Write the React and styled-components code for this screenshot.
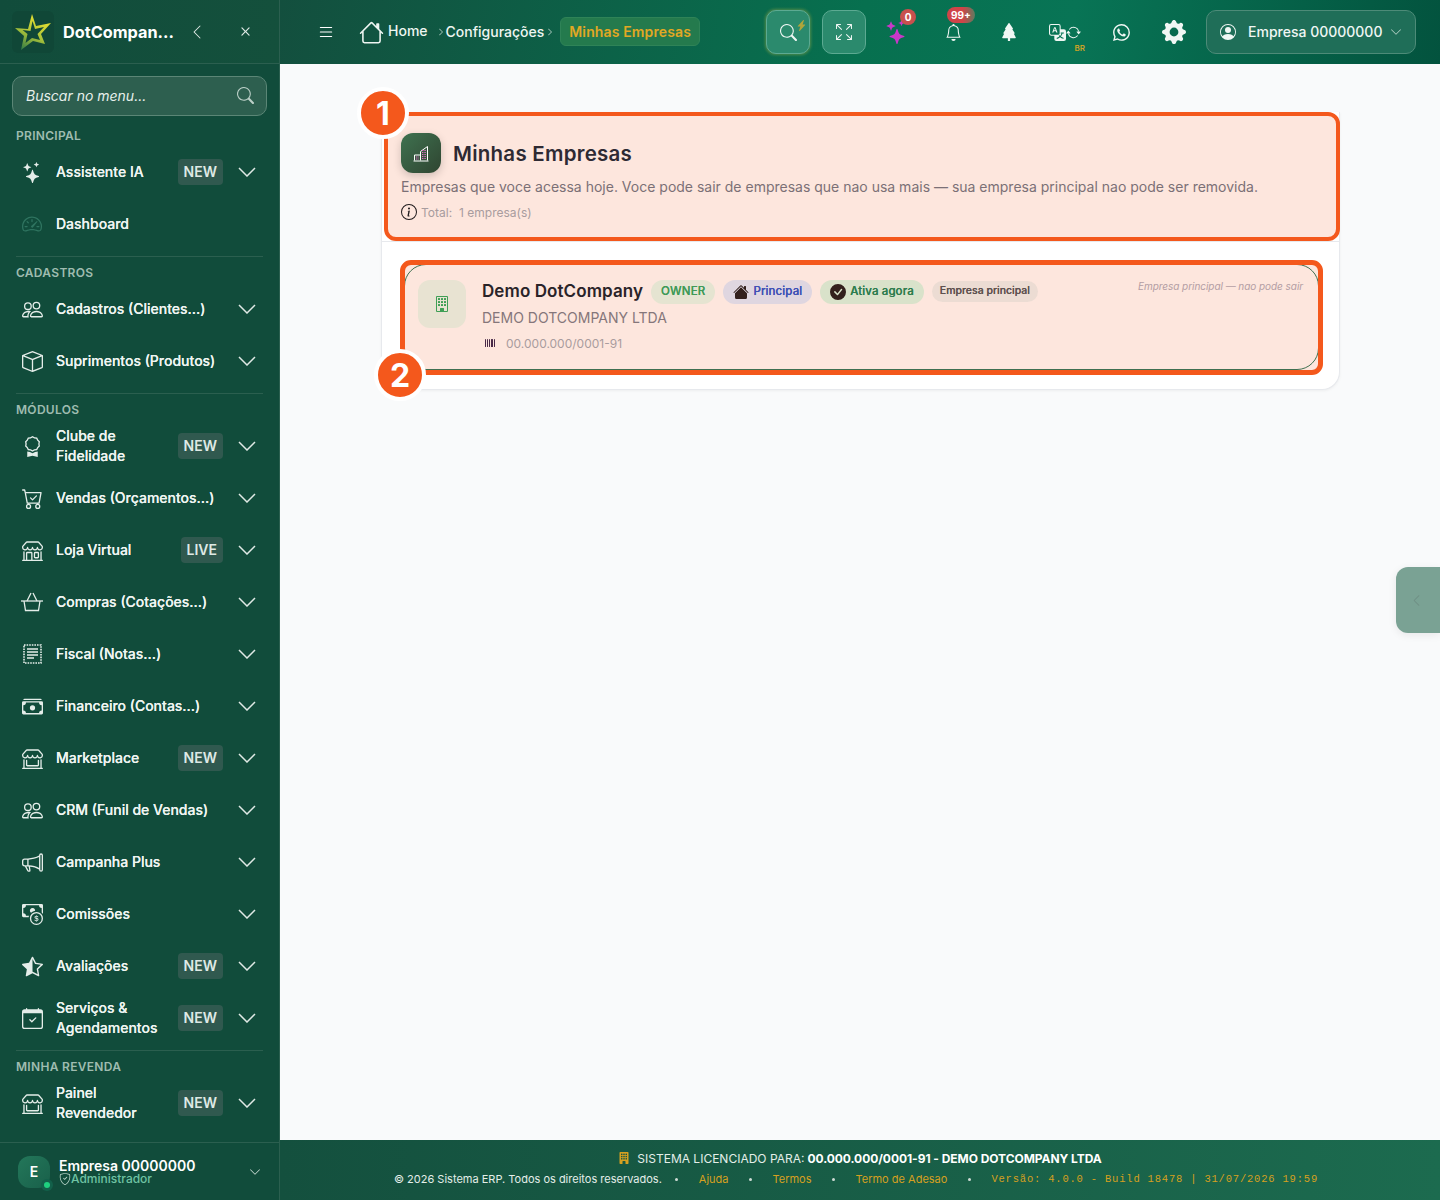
import React from 'react';
import styled, { createGlobalStyle } from 'styled-components';
import {
  BsStars, BsSpeedometer2, BsPeople, BsBox, BsAward, BsCartCheck, BsShop,
  BsCashStack, BsShopWindow, BsMegaphone, BsCashCoin, BsStarHalf, BsCalendarCheck,
  BsSearch, BsArrowsFullscreen, BsBell, BsTreeFill, BsTranslate, BsArrowRepeat,
  BsWhatsapp, BsGearFill, BsPersonCircle, BsBuilding, BsBuildingFill, BsUpc, BsInfoCircle,
  BsHouse, BsHouseFill, BsCheckCircleFill, BsList, BsShieldCheck, BsChevronDown,
  BsChevronLeft, BsChevronRight, BsX, BsLightningChargeFill,
} from 'react-icons/bs';

const GlobalStyle = createGlobalStyle`
  html, body { margin: 0; padding: 0; background: #f9fafb; }
  body { font-family: Inter, "Liberation Sans", sans-serif; }
  * { box-sizing: border-box; }
`;

const Page = styled.div`
  display: grid;
  grid-template-columns: 280px 1fr;
  height: 1200px;
  overflow: hidden;
  position: relative;
`;

/* sidebar */
const Sidebar = styled.aside`
  display: flex;
  flex-direction: column;
  background: #114c3b;
  border-right: 1px solid #2b5f4f;
  color: #eef4f1;
`;

const Brand = styled.div`
  display: flex;
  align-items: center;
  height: 64px;
  padding-left: 12px;
  border-bottom: 1px solid #2b5f4f;
  background: linear-gradient(90deg, #114c3b, #14503c);
`;

const LogoBox = styled.div`
  width: 42px;
  height: 42px;
  margin-right: 9px;
  background: #104737;
  border-radius: 6px;
  display: flex;
  align-items: center;
  justify-content: center;
`;

const BrandName = styled.span`
  width: 110px;
  font-size: 16.3px;
  font-weight: 700;
  color: #fff;
  white-space: nowrap;
`;

const BrandAction = styled.button`
  width: 48px;
  padding: 0;
  border: 0;
  background: none;
  color: #dfe9e5;
  display: flex;
  align-items: center;
  justify-content: center;
`;

const SearchBox = styled.div`
  display: flex;
  align-items: center;
  justify-content: space-between;
  height: 40px;
  margin: 12px 12px 11px 12px;
  padding: 0 12px 2px 13px;
  background: #2d5f4f;
  border: 1px solid #5b8676;
  border-radius: 10px;
  font-size: 14px;
  font-style: italic;
  color: #e6efeb;
  svg { color: #bcd0c8; font-style: normal; }
`;

const Nav = styled.nav`
  flex: 1;
`;

const NavLabel = styled.div`
  height: 17px;
  line-height: 17px;
  margin-bottom: 2px;
  padding-left: 16px;
  font-size: 12px;
  font-weight: 600;
  letter-spacing: 0.3px;
  color: #9fbcb0;
`;

const NavDivider = styled.div`
  height: 1px;
  margin: 6px 16px 7px 16px;
  background: #2b5f4f;
`;

const NavRow = styled.div`
  display: flex;
  align-items: center;
  height: 52px;
  padding: 0 23px 0 21px;
`;

const NavIcon = styled.span`
  width: 22px;
  height: 22px;
  margin-right: 13px;
  display: flex;
  align-items: center;
  justify-content: center;
  color: ${(p) => (p.$dim ? '#2f7460' : '#e4ede9')};
  flex-shrink: 0;
`;

const NavText = styled.span`
  flex: 1;
  font-size: 14px;
  font-weight: 500;
  line-height: 20px;
  color: #eef4f1;
  text-shadow: 0 0 0.4px currentColor;
  max-width: ${(p) => (p.$narrow ? '110px' : 'none')};
  margin-right: ${(p) => (p.$narrow ? 'auto' : '0')};
  white-space: ${(p) => (p.$narrow ? 'normal' : 'nowrap')};
`;

const NavBadge = styled.span`
  height: 26px;
  line-height: 26px;
  margin-left: auto;
  padding: 0 6px;
  background: #30594f;
  border-radius: 4px;
  font-size: 14px;
  font-weight: 600;
  color: #dfe9e5;
`;

const Caret = styled.svg`
  margin-left: 15px;
  flex-shrink: 0;
`;

function WideChevron() {
  return (
    <Caret width="18" height="10" viewBox="0 0 18 10" fill="none" stroke="#dfe9e5" strokeWidth="1.5">
      <path d="M1 1l8 8 8-8" />
    </Caret>
  );
}

function FiscalIcon() {
  return (
    <svg width="19" height="20" viewBox="0 0 19 20" fill="none" stroke="currentColor">
      <rect x="1" y="1" width="17" height="18" strokeWidth="1.6" strokeDasharray="1.6 1" />
      <path d="M4 5h11M4 8h11M4 11h11M4 14h7" strokeWidth="1.4" />
    </svg>
  );
}

function BasketIcon() {
  return (
    <svg width="22" height="20" viewBox="0 0 22 20" fill="none" stroke="currentColor" strokeWidth="1.3">
      <path d="M0 9h22" />
      <path d="M6 9l4-8M16 9l-4-8" />
      <path d="M3 9l1.500 9.500h13L19 9" />
    </svg>
  );
}

function StarLogo() {
  return (
    <svg width="38" height="38" viewBox="0 0 38 38">
      <defs>
        <linearGradient id="starGold" x1="0.7" y1="0" x2="0.2" y2="1">
          <stop offset="0" stopColor="#f2e52e" />
          <stop offset="0.55" stopColor="#a9c23a" />
          <stop offset="1" stopColor="#2f7a45" />
        </linearGradient>
      </defs>
      <path
        d="M18 1l4 12 15-3-10 11 4 10-12-3-12 9 3-14L1 15l13 1z"
        fill="url(#starGold)"
      />
      <path d="M18.500 8l2.500 8 9-2-6.500 7 2.500 6-8-2-6.500 5 2-9-5-4 8 1z" fill="#104737" />
    </svg>
  );
}

const navGroups = [
  {
    title: 'PRINCIPAL',
    items: [
      { icon: <BsStars size={21} />, text: 'Assistente IA', badge: 'NEW' },
      { icon: <BsSpeedometer2 size={20} />, text: 'Dashboard', dim: true, noCaret: true },
    ],
  },
  {
    title: 'CADASTROS',
    items: [
      { icon: <BsPeople size={21} />, text: 'Cadastros (Clientes...)' },
      { icon: <BsBox size={21} />, text: 'Suprimentos (Produtos)' },
    ],
  },
  {
    title: 'MÓDULOS',
    items: [
      { icon: <BsAward size={21} />, text: 'Clube de Fidelidade', badge: 'NEW', narrow: true },
      { icon: <BsCartCheck size={21} />, text: 'Vendas (Orçamentos...)' },
      { icon: <BsShop size={21} />, text: 'Loja Virtual', badge: 'LIVE' },
      { icon: <BasketIcon />, text: 'Compras (Cotações...)' },
      { icon: <FiscalIcon />, text: 'Fiscal (Notas...)' },
      { icon: <BsCashStack size={21} />, text: 'Financeiro (Contas...)' },
      { icon: <BsShopWindow size={21} />, text: 'Marketplace', badge: 'NEW' },
      { icon: <BsPeople size={21} />, text: 'CRM (Funil de Vendas)' },
      { icon: <BsMegaphone size={21} />, text: 'Campanha Plus' },
      { icon: <BsCashCoin size={21} />, text: 'Comissões' },
      { icon: <BsStarHalf size={21} />, text: 'Avaliações', badge: 'NEW' },
      { icon: <BsCalendarCheck size={21} />, text: 'Serviços & Agendamentos', badge: 'NEW', narrow: true },
    ],
  },
  {
    title: 'MINHA REVENDA',
    items: [{ icon: <BsShopWindow size={21} />, text: 'Painel Revendedor', badge: 'NEW', narrow: true }],
  },
];

const UserBox = styled.div`
  display: flex;
  align-items: center;
  height: 58px;
  padding: 0 18px;
  border-top: 1px solid #2b5f4f;
`;

const Avatar = styled.div`
  position: relative;
  width: 32px;
  height: 32px;
  margin-right: 9px;
  border-radius: 12px;
  background: linear-gradient(135deg, #23775a, #19604a);
  display: flex;
  align-items: center;
  justify-content: center;
  font-size: 14px;
  font-weight: 600;
  color: #fff;
`;

const OnlineDot = styled.span`
  position: absolute;
  right: 0;
  bottom: 0;
  width: 6px;
  height: 6px;
  border-radius: 50%;
  background: #1fd07f;
  box-shadow: 0 0 0 3px #13604a;
`;

const UserText = styled.div`
  flex: 1;
  display: flex;
  flex-direction: column;
`;

const UserName = styled.span`
  font-size: 14px;
  line-height: 15px;
  font-weight: 600;
  color: #fff;
`;

const UserRole = styled.span`
  display: flex;
  align-items: center;
  font-size: 12px;
  line-height: 12px;
  font-weight: 500;
  color: #6fc3a3;
  svg { color: #bcd8cc; }
`;

/* top bar */
const Column = styled.div`
  display: flex;
  flex-direction: column;
  min-width: 0;
`;

const TopBar = styled.header`
  display: flex;
  align-items: center;
  height: 64px;
  padding: 0 24px 0 37px;
  background: linear-gradient(100deg, #134f3e 0%, #07704f 50%, #087455 68%, #03533e 100%);
  color: #fff;
`;

const Crumbs = styled.div`
  display: flex;
  align-items: center;
  margin-left: 24px;
  font-size: 14px;
  font-weight: 500;
  color: #eef6f2;
`;

const CrumbText = styled.span`
  margin-left: ${(p) => p.$left || 0}px;
  position: relative;
  top: ${(p) => p.$lift || 0}px;
`;

const CrumbSep = styled(BsChevronRight)`
  margin: 0 ${(p) => p.$right || 0}px 0 ${(p) => p.$left || 0}px;
  color: #d9e9e2;
`;

const CurrentCrumb = styled.span`
  position: relative;
  top: -1px;
  height: 29px;
  line-height: 27px;
  margin-left: 6px;
  padding: 0 8px;
  background: #247a4d;
  border: 1px solid #2f8357;
  border-radius: 6px;
  font-weight: 600;
  letter-spacing: 0.14px;
  color: #e2a823;
`;

const Tools = styled.div`
  display: flex;
  align-items: center;
  gap: 12px;
  margin-left: auto;
`;

const GlassButton = styled.button`
  position: relative;
  width: 44px;
  height: 44px;
  padding: 0;
  background: #2b8a6d;
  border: 1px solid #5caa92;
  border-radius: 10px;
  color: #f0f7f4;
  display: flex;
  align-items: center;
  justify-content: center;
  box-shadow: ${(p) => (p.$glow ? '0 0 3px 1px rgba(212, 196, 70, 0.35)' : 'none')};
`;

const Bolt = styled(BsLightningChargeFill)`
  position: absolute;
  top: 9px;
  right: 2px;
  color: #b0a53a;
`;

const ToolSlot = styled.div`
  position: relative;
  width: 44px;
  height: 44px;
  margin-left: ${(p) => p.$shift || 0}px;
  display: flex;
  align-items: center;
  justify-content: center;
  color: #f0f7f4;
`;

const Count = styled.span`
  position: absolute;
  top: ${(p) => p.$top}px;
  left: ${(p) => p.$left}px;
  height: 16px;
  min-width: 16px;
  padding: 0 4px;
  line-height: 16px;
  text-align: center;
  border-radius: 8px;
  background: ${(p) => p.$bg};
  font-size: 10px;
  font-weight: 700;
  color: #fff;
`;

const Locale = styled.span`
  position: absolute;
  top: 33px;
  right: 2px;
  font-size: 8px;
  font-weight: 600;
  color: #c9a226;
`;

const AccountButton = styled.div`
  display: flex;
  align-items: center;
  width: 210px;
  height: 44px;
  margin-left: -2px;
  padding: 0 13px 0 13px;
  background: #1f6e58;
  border: 1px solid #4d8b78;
  border-radius: 10px;
  font-size: 14px;
  font-weight: 500;
  color: #f0f7f4;
  span { margin-left: 12px; padding-bottom: 2px; flex: 1; white-space: nowrap; }
  svg:last-child { color: #b8d3c8; }
`;

/* content */
const Content = styled.main`
  flex: 1;
  padding: 48px 100px 0 101px;
`;

const Card = styled.section`
  background: #fff;
  border: 1px solid #e7e9ed;
  border-top: 0;
  border-radius: 0 0 18px 18px;
  box-shadow: 0 1px 3px rgba(0, 0, 0, 0.05);
  height: 278px;
`;

const Highlight = styled.div`
  position: relative;
  background: #fde6dd;
  border: ${(p) => p.$weight}px solid #f4581c;
  border-radius: 12px;
`;

const StepBadge = styled.span`
  position: absolute;
  left: ${(p) => p.$left}px;
  top: ${(p) => p.$top}px;
  width: 52px;
  height: 52px;
  border: 4px solid #fff;
  border-radius: 50%;
  background: #f4581c;
  color: #fff;
  display: flex;
  align-items: center;
  justify-content: center;
  font-size: 32px;
  font-weight: 700;
  z-index: 3;
`;

const CardHead = styled(Highlight)`
  height: 129px;
  margin: 0 -1px 0 2px;
  padding: 17px 13px 0;
`;

const HeadDivider = styled.div`
  height: 1px;
  background: #e7e9ed;
`;

const TitleRow = styled.div`
  display: flex;
  align-items: center;
  gap: 12px;
`;

const HeadIcon = styled.div`
  width: 40px;
  height: 40px;
  border-radius: 12px;
  background: linear-gradient(135deg, #3f7250, #2f4531);
  box-shadow: 0 3px 8px rgba(0, 0, 0, 0.18);
  display: flex;
  align-items: center;
  justify-content: center;
`;

const Title = styled.h1`
  margin: 0;
  font-size: 20.5px;
  font-weight: 600;
  letter-spacing: 0.25px;
  color: #2e2a33;
`;

const Description = styled.p`
  margin: 4px 0 0;
  font-size: 14px;
  line-height: 20px;
  color: #7b7076;
  white-space: nowrap;
`;

const TotalLine = styled.div`
  display: flex;
  align-items: center;
  margin-top: 7px;
  height: 16px;
  font-size: 12px;
  color: #a89c9e;
  svg { color: #1f1a1c; margin-right: 4px; }
  span + span { margin-left: 7px; }
`;

const ItemArea = styled.div`
  padding: 18px 16px 0 18px;
`;

const ItemFrame = styled(Highlight)`
  height: 115px;
  border-radius: 11px;
  overflow: hidden;
`;

const ItemWrap = styled.div`
  position: relative;
`;

const ItemCard = styled.div`
  display: flex;
  height: 106px;
  margin: -1px -1px 0;
  padding: 15px 15px 0 13px;
  border: 1px solid #3f6f50;
  border-radius: 22px;
`;

const ItemTile = styled.div`
  width: 48px;
  height: 48px;
  margin-right: 16px;
  border-radius: 12px;
  background: #e8e3d2;
  color: #3f9f55;
  display: flex;
  align-items: center;
  justify-content: center;
`;

const ItemBody = styled.div`
  flex: 1;
`;

const NameRow = styled.div`
  display: flex;
  align-items: center;
  height: 24px;
  gap: 8px;
`;

const ItemName = styled.span`
  padding-bottom: 2px;
  font-size: 17px;
  font-weight: 600;
  letter-spacing: 0.09px;
  color: #2a2328;
  white-space: nowrap;
`;

const Chip = styled.span`
  display: inline-flex;
  align-items: center;
  gap: 4px;
  height: ${(p) => (p.$small ? 21 : 24)}px;
  margin-top: ${(p) => (p.$small ? -1 : 0)}px;
  padding: 0 ${(p) => p.$pad || 10}px 2px;
  border-radius: 12px;
  background: ${(p) => p.$bg};
  color: ${(p) => p.$fg};
  font-size: ${(p) => (p.$small ? 10.5 : 11.5)}px;
  font-weight: 500;
  letter-spacing: ${(p) => p.$spacing || 0}px;
  text-shadow: 0 0 0.3px currentColor;
  white-space: nowrap;
  svg { color: #33201d; margin-top: 2px; }
`;

const LegalName = styled.div`
  margin-top: 4px;
  font-size: 14px;
  line-height: 20px;
  color: #85767a;
`;

const TaxId = styled.div`
  display: flex;
  align-items: center;
  height: 16px;
  margin-top: 7px;
  font-size: 12px;
  color: #a99c9e;
  svg { margin-right: 8px; color: #4a2a48; }
`;

const LeaveNote = styled.span`
  margin-top: -1px;
  font-size: 10px;
  font-style: italic;
  letter-spacing: -0.05px;
  line-height: 14px;
  color: #b39da3;
  white-space: nowrap;
`;

/* footer */
const Footer = styled.footer`
  height: 60px;
  padding-top: 10px;
  background: linear-gradient(90deg, #14503e, #1c6b4f);
  display: flex;
  flex-direction: column;
  align-items: center;
  color: #e4eee9;
`;

const LicenseLine = styled.div`
  display: flex;
  align-items: center;
  height: 16px;
  font-size: 12px;
  svg { color: #d6a020; margin-right: 7px; }
  b { font-weight: 700; letter-spacing: -0.05px; color: #fff; margin-left: 3px; }
`;

const MetaLine = styled.div`
  display: flex;
  align-items: center;
  gap: 20.5px;
  height: 16px;
  margin: 5px 8px 0 0;
  font-size: 11px;
  white-space: nowrap;
`;

const Copyright = styled.span`
  margin-right: -7px;
`;

const FooterLink = styled.span`
  color: #d6a020;
`;

const Dot = styled.span`
  width: 3px;
  height: 3px;
  border-radius: 50%;
  background: #cfdcd6;
`;

const BuildInfo = styled.span`
  font-family: "Liberation Mono", monospace;
  font-size: 10.500px;
  letter-spacing: 0.8px;
  color: #d6a020;
`;

const SideTab = styled.div`
  position: absolute;
  right: 0;
  top: 567px;
  width: 44px;
  height: 66px;
  background: #7aa294;
  border-radius: 12px 0 0 12px;
  box-shadow: 0 2px 8px rgba(0, 0, 0, 0.08);
  display: flex;
  align-items: center;
  padding-left: 14px;
  color: #6f8f84;
`;

function NavGroup({ group, first }) {
  return (
    <>
      {!first && <NavDivider />}
      <NavLabel>{group.title}</NavLabel>
      {group.items.map((item) => (
        <NavRow key={item.text}>
          <NavIcon $dim={item.dim}>{item.icon}</NavIcon>
          <NavText $narrow={item.narrow}>{item.text}</NavText>
          {item.badge && <NavBadge>{item.badge}</NavBadge>}
          {!item.noCaret && <WideChevron />}
        </NavRow>
      ))}
    </>
  );
}

function Side() {
  return (
    <Sidebar>
      <Brand>
        <LogoBox>
          <StarLogo />
        </LogoBox>
        <BrandName>DotCompan...</BrandName>
        <BrandAction>
          <BsChevronLeft size={16} />
        </BrandAction>
        <BrandAction>
          <BsX size={19} />
        </BrandAction>
      </Brand>
      <SearchBox>
        Buscar no menu...
        <BsSearch size={17} />
      </SearchBox>
      <Nav>
        {navGroups.map((g, i) => (
          <NavGroup key={g.title} group={g} first={i === 0} />
        ))}
      </Nav>
      <UserBox>
        <Avatar>
          E
          <OnlineDot />
        </Avatar>
        <UserText>
          <UserName>Empresa 00000000</UserName>
          <UserRole>
            <BsShieldCheck size={12} />
            Administrador
          </UserRole>
        </UserText>
        <BsChevronDown size={12} color="#cfe0d8" />
      </UserBox>
    </Sidebar>
  );
}

function Top() {
  return (
    <TopBar>
      <BsList size={18} />
      <Crumbs>
        <BsHouse size={25} />
        <CrumbText $left={4} $lift={-2}>Home</CrumbText>
        <CrumbSep size={8} $left={9} $right={1} />
        <CrumbText $lift={-1}>Configurações</CrumbText>
        <CrumbSep size={8} $left={2} />
        <CurrentCrumb>Minhas Empresas</CurrentCrumb>
      </Crumbs>
      <Tools>
        <GlassButton $glow>
          <BsSearch size={17} />
          <Bolt size={11} />
        </GlassButton>
        <GlassButton>
          <BsArrowsFullscreen size={16} />
        </GlassButton>
        <ToolSlot $shift={-3}>
          <BsStars size={24} color="#c838c8" />
          <Count $top={-1} $left={25} $bg="#c8504e">0</Count>
        </ToolSlot>
        <ToolSlot>
          <BsBell size={17} />
          <Count $top={-3} $left={16} $bg="linear-gradient(90deg, #d04448 55%, #5f7a60)">99+</Count>
        </ToolSlot>
        <ToolSlot>
          <BsTreeFill size={18} />
        </ToolSlot>
        <ToolSlot>
          <BsTranslate size={17} />
          <BsArrowRepeat size={15} />
          <Locale>BR</Locale>
        </ToolSlot>
        <ToolSlot>
          <BsWhatsapp size={17} />
        </ToolSlot>
        <ToolSlot $shift={-3}>
          <BsGearFill size={24} />
        </ToolSlot>
        <AccountButton>
          <BsPersonCircle size={16} />
          <span>Empresa 00000000</span>
          <BsChevronDown size={12} />
        </AccountButton>
      </Tools>
    </TopBar>
  );
}

function BuildingGlyph() {
  return (
    <svg width="16" height="17" viewBox="0 0 16 17" fill="none">
      <path d="M7.500 15.500V6.500L14.500 1.500v14" stroke="#fff" strokeWidth="1" />
      <path d="M7.500 10H1.500v5.500" stroke="#fff" strokeWidth="1" />
      <path d="M9 5.500h4M9 7.500h4M9 9.500h4M9 11.500h4M9 13.500h4M3 12h3M3 14h3" stroke="#e06cc6" strokeWidth="1.2" strokeDasharray="1 0.6" />
      <path d="M0.500 16h15" stroke="#fff" strokeWidth="1" />
    </svg>
  );
}

export default function App() {
  return (
    <Page>
      <GlobalStyle />
      <Side />
      <Column>
        <Top />
        <Content>
          <Card>
            <CardHead $weight={4}>
              <StepBadge $left={-31} $top={-29}>1</StepBadge>
              <TitleRow>
                <HeadIcon>
                  <BuildingGlyph />
                </HeadIcon>
                <Title>Minhas Empresas</Title>
              </TitleRow>
              <Description>
                Empresas que voce acessa hoje. Voce pode sair de empresas que nao usa mais — sua empresa principal nao pode ser removida.
              </Description>
              <TotalLine>
                <BsInfoCircle size={16} />
                <span>Total:</span>
                <span>1 empresa(s)</span>
              </TotalLine>
            </CardHead>
            <HeadDivider />
            <ItemArea>
              <ItemWrap>
                <ItemFrame $weight={5}>
                  <ItemCard>
                    <ItemTile>
                      <BsBuilding size={16} />
                    </ItemTile>
                    <ItemBody>
                      <NameRow>
                        <ItemName>Demo DotCompany</ItemName>
                        <Chip $bg="#e5e4d1" $fg="#3f9a58" $spacing={0.2}>OWNER</Chip>
                        <Chip $bg="#dfd6e0" $fg="#3f51b5" $pad={10} $spacing={0.1}>
                          <BsHouseFill size={16} />
                          Principal
                        </Chip>
                        <Chip $bg="#d9e2ca" $fg="#2e7d4f" $pad={10} $spacing={0.1}>
                          <BsCheckCircleFill size={16} />
                          Ativa agora
                        </Chip>
                        <Chip $small $bg="#ecdcd3" $fg="#5f5250" $pad={8}>Empresa principal</Chip>
                      </NameRow>
                      <LegalName>DEMO DOTCOMPANY LTDA</LegalName>
                      <TaxId>
                        <BsUpc size={16} />
                        00.000.000/0001-91
                      </TaxId>
                    </ItemBody>
                    <LeaveNote>Empresa principal — nao pode sair</LeaveNote>
                  </ItemCard>
                </ItemFrame>
                <StepBadge $left={-26} $top={89}>2</StepBadge>
              </ItemWrap>
            </ItemArea>
          </Card>
        </Content>
        <Footer>
          <LicenseLine>
            <BsBuildingFill size={12} />
            SISTEMA LICENCIADO PARA:
            <b>00.000.000/0001-91 - DEMO DOTCOMPANY LTDA</b>
          </LicenseLine>
          <MetaLine>
            <Copyright>© 2026 Sistema ERP. Todos os direitos reservados.</Copyright>
            <Dot />
            <FooterLink>Ajuda</FooterLink>
            <Dot />
            <FooterLink>Termos</FooterLink>
            <Dot />
            <FooterLink>Termo de Adesao</FooterLink>
            <Dot />
            <BuildInfo>Versão: 4.0.0 - Build 18478 | 31/07/2026 19:59</BuildInfo>
          </MetaLine>
        </Footer>
      </Column>
      <SideTab>
        <BsChevronLeft size={13} />
      </SideTab>
    </Page>
  );
}
